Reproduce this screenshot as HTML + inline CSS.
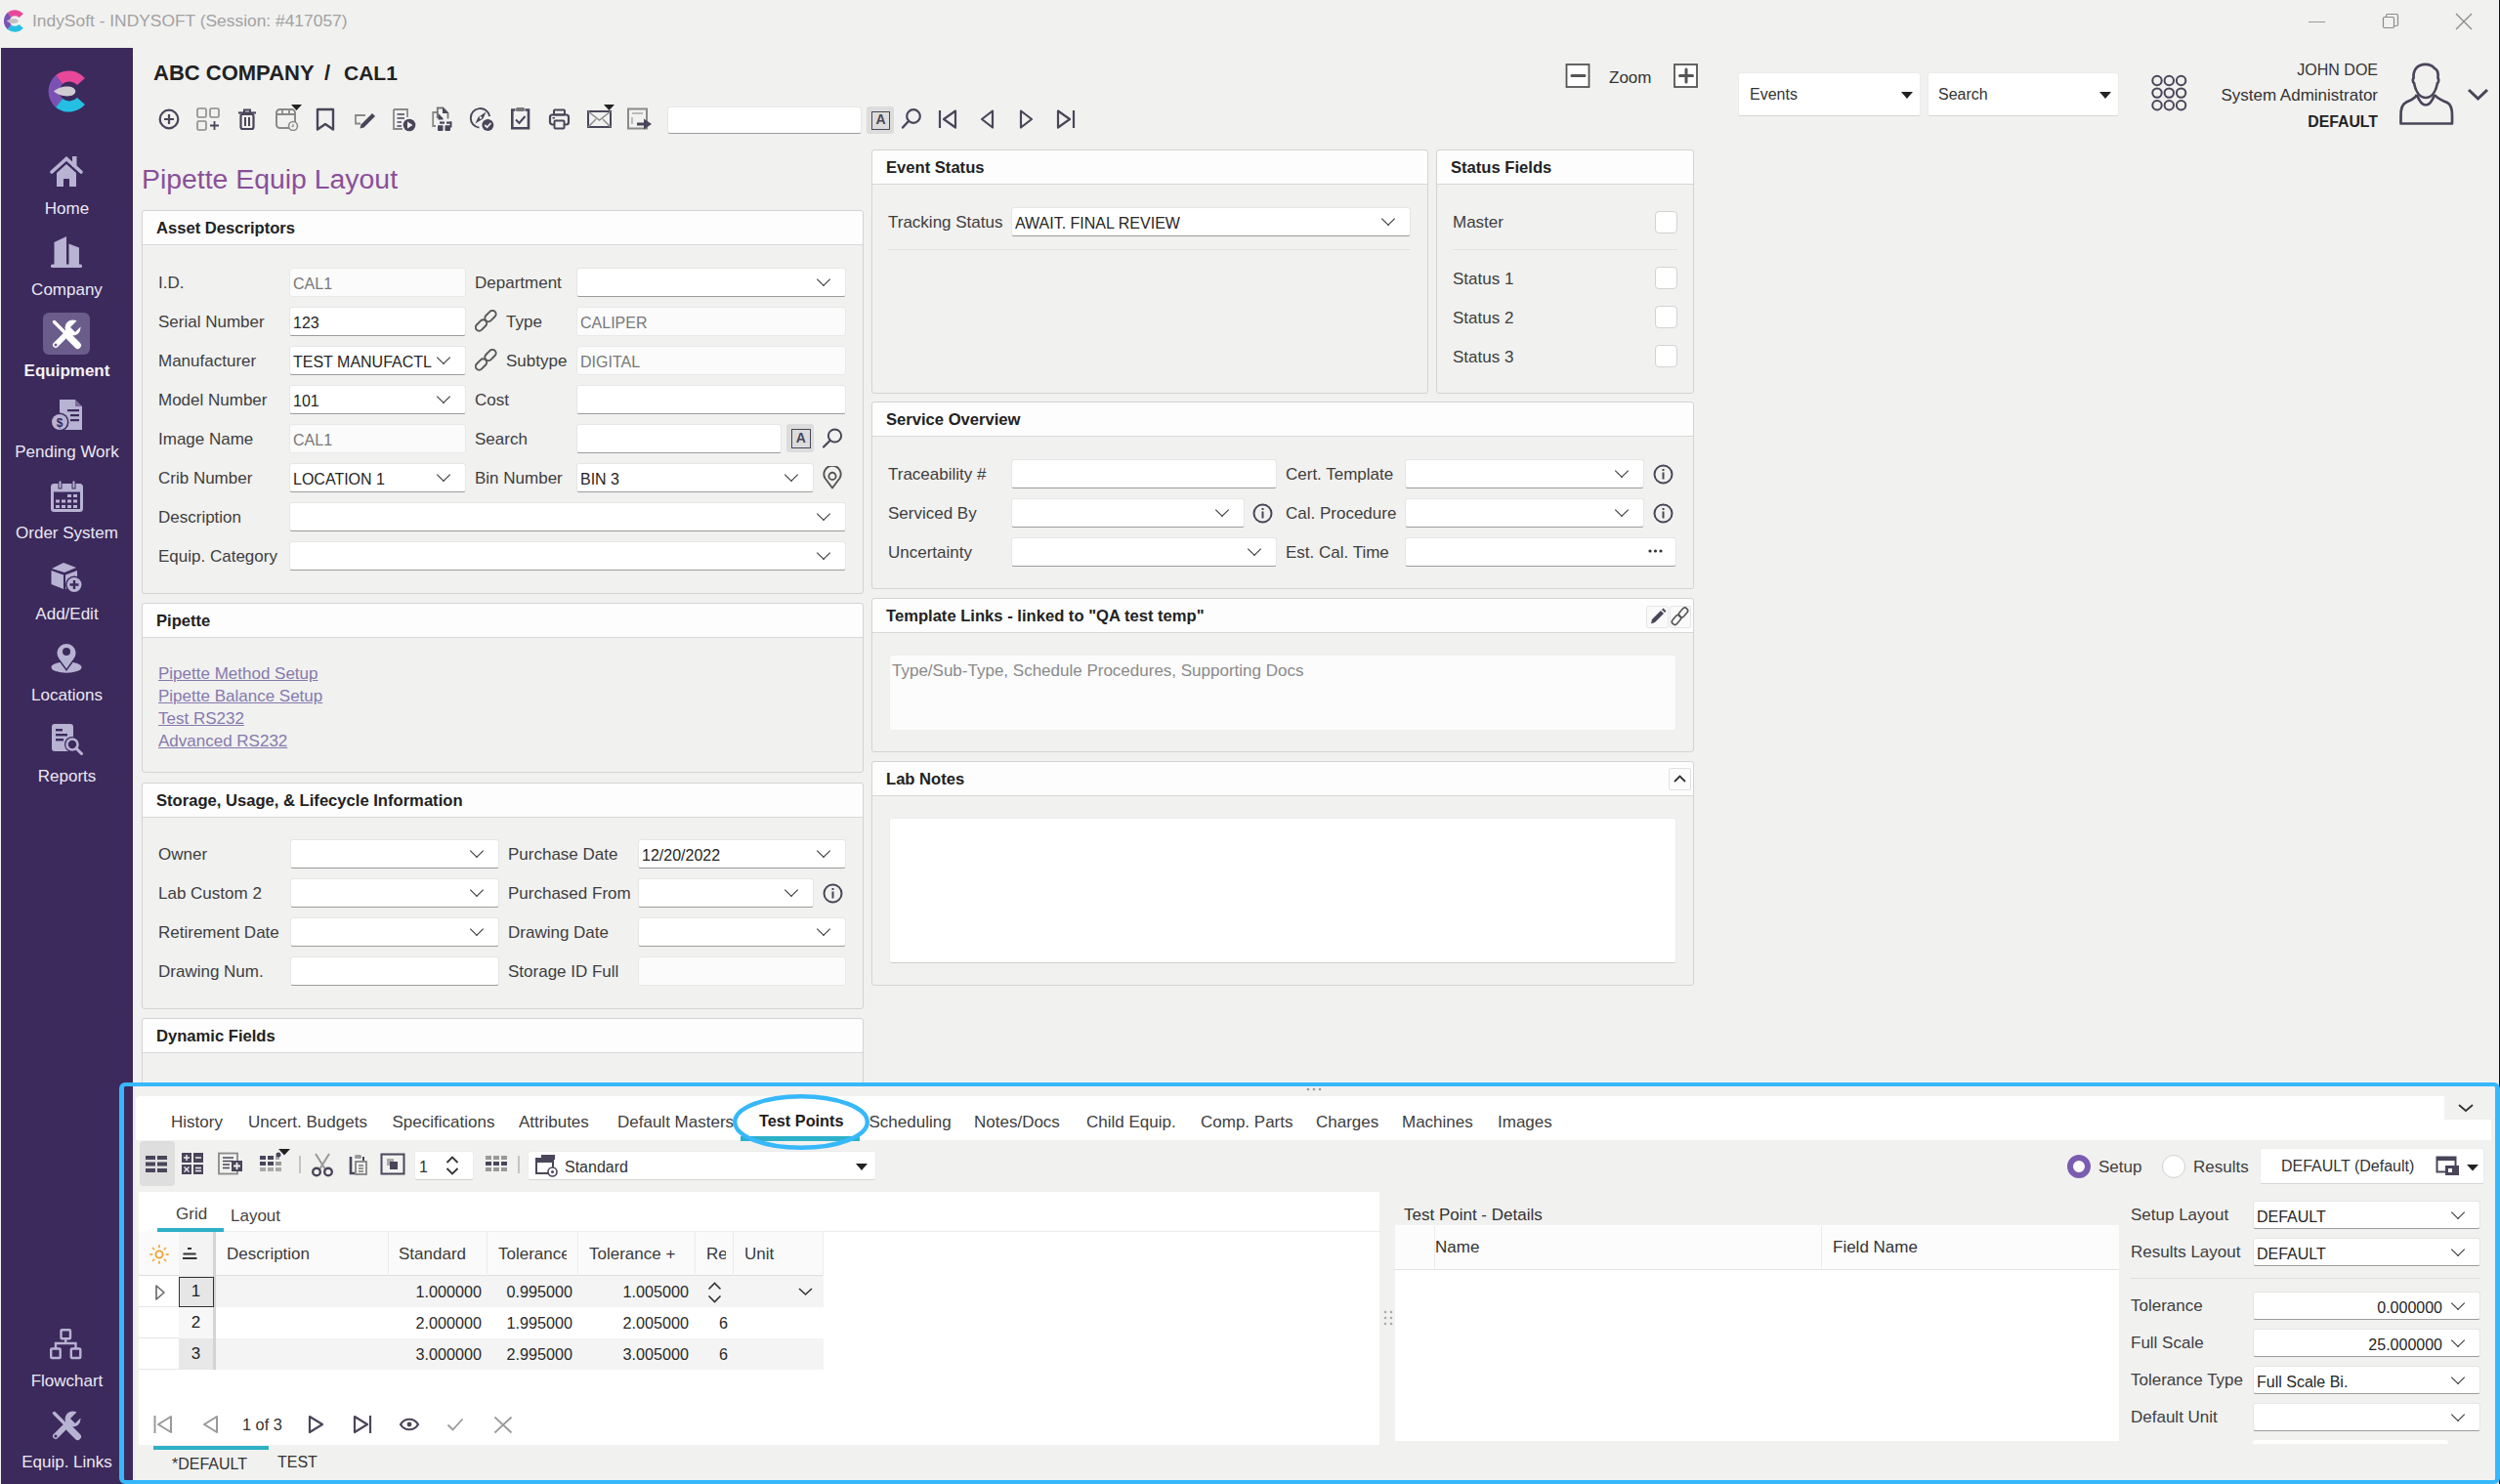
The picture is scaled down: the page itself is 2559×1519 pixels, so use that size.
<!DOCTYPE html>
<html><head><meta charset="utf-8">
<style>
*{box-sizing:border-box;margin:0;padding:0}
html,body{width:2559px;height:1519px;overflow:hidden;background:#f1f1f0;font-family:"Liberation Sans",sans-serif;color:#3a3a3a;font-size:17px}
.a{position:absolute}
.t{position:absolute;white-space:nowrap;line-height:30px;height:30px}
.panel{position:absolute;border:1px solid #d3d3d3;border-radius:3px;background:#f1f1f0}
.ph{position:absolute;left:0;right:0;top:0;height:35px;background:#fdfdfd;border-bottom:1px solid #d8d8d8;border-radius:3px 3px 0 0;font-weight:bold;font-size:16.6px;color:#222;padding-left:14px;padding-top:1px;line-height:34px;white-space:nowrap}
.inp{position:absolute;height:30px;background:#fff;border-radius:3px;border:1px solid #e6e6e6;border-bottom:1px solid #9c9c9c;line-height:29px;padding-top:1px;padding-left:3px;color:#262626;white-space:nowrap;overflow:hidden;font-size:16px}
.ro{background:#fbfbfb;border:1px solid #e9e9e9;color:#787878}
.dd span{display:inline-block;max-width:calc(100% - 34px);overflow:hidden;vertical-align:top}
.dd::after{content:'';position:absolute;right:17px;top:6px;width:9px;height:9px;border-right:1.6px solid #333;border-bottom:1.6px solid #333;transform:rotate(45deg)}
.lbl{position:absolute;white-space:nowrap;line-height:30px;height:30px;color:#3e3e3e;margin-top:1px}
.side{position:absolute;left:1px;top:49px;width:135px;height:1470px;background:#3b2a5b}
.si{position:absolute;left:1px;width:135px;text-align:center;color:#ece8f4;font-size:17px;line-height:20px;white-space:nowrap}
.lnk{position:absolute;color:#857aae;text-decoration:underline;white-space:nowrap;line-height:23px;font-size:17px}
.cb{position:absolute;width:23px;height:23px;background:#fff;border:1px solid #d2d2d2;border-radius:4px}
.sep{position:absolute;height:1px;background:#e2e2e2}
</style></head><body>
<svg class="a" style="left:3px;top:9px" width="22" height="25" viewBox="0 0 41 47">
 <path d="M39 10 A22 22 0 0 0 9 7 L16 16 A11 11 0 0 1 31 17 Z" fill="#e8489a"/>
 <path d="M9 7 A22 22 0 0 0 9 40 L16 31 A11 11 0 0 1 16 16 Z" fill="#7b52b4"/>
 <path d="M9 40 A22 22 0 0 0 39 37 L31 30 A11 11 0 0 1 16 31 Z" fill="#24bfe3"/>
 <path d="M7 23.5 C12 19 22 17 27 20 C30 22 30 25 27 27 C22 30 12 28 7 23.5 Z" fill="#c4c0c4"/></svg>
<div class="t" style="left:33px;top:6px;font-size:17.4px;color:#a2a2a2">IndySoft - INDYSOFT (Session: #417057)</div>
<div class="a" style="left:2363px;top:22px;width:17px;height:1px;background:#9a9a9a"></div>
<svg class="a" style="left:2438px;top:13px" width="18" height="18" viewBox="0 0 18 18"><rect x="1.5" y="4.5" width="11" height="11" rx="1.5" fill="none" stroke="#8a8a8a" stroke-width="1.2"/><path d="M4.5 4.5 V3 a1.5 1.5 0 0 1 1.5 -1.5 H15 a1.5 1.5 0 0 1 1.5 1.5 V12 a1.5 1.5 0 0 1 -1.5 1.5 H12.5" fill="none" stroke="#8a8a8a" stroke-width="1.2"/></svg>
<svg class="a" style="left:2513px;top:13px" width="18" height="18" viewBox="0 0 18 18"><path d="M1 1 L17 17 M17 1 L1 17" stroke="#8a8a8a" stroke-width="1.3"/></svg>
<div class="a" style="left:2558px;top:0;width:1px;height:1519px;background:#111"></div>
<div class="side"></div>
<div class="t" style="left:157px;top:60px;font-size:22px;font-weight:bold;color:#222">ABC COMPANY</div>
<div class="t" style="left:332px;top:60px;font-size:22px;font-weight:bold;color:#222">/</div>
<div class="t" style="left:352px;top:60px;font-size:21px;font-weight:bold;color:#222">CAL1</div>
<div class="t" style="left:145px;top:164px;font-size:28.4px;color:#8a4f98;line-height:38px;height:38px">Pipette Equip Layout</div>
<div class="panel" style="left:145px;top:215px;width:739px;height:393px"><div class="ph">Asset Descriptors</div></div>
<div class="panel" style="left:145px;top:617px;width:739px;height:174px"><div class="ph">Pipette</div></div>
<div class="panel" style="left:145px;top:801px;width:739px;height:232px"><div class="ph">Storage, Usage, &amp; Lifecycle Information</div></div>
<div class="panel" style="left:145px;top:1042px;width:739px;height:120px"><div class="ph">Dynamic Fields</div></div>
<div class="panel" style="left:892px;top:153px;width:570px;height:250px"><div class="ph">Event Status</div></div>
<div class="panel" style="left:1470px;top:153px;width:264px;height:250px"><div class="ph">Status Fields</div></div>
<div class="panel" style="left:892px;top:411px;width:842px;height:192px"><div class="ph">Service Overview</div></div>
<div class="panel" style="left:892px;top:612px;width:842px;height:158px"><div class="ph">Template Links - linked to "QA test temp"</div></div>
<div class="panel" style="left:892px;top:779px;width:842px;height:230px"><div class="ph">Lab Notes</div></div>
<div class="lbl" style="left:162px;top:274px;">I.D.</div>
<div class="lbl" style="left:162px;top:314px;">Serial Number</div>
<div class="lbl" style="left:162px;top:354px;">Manufacturer</div>
<div class="lbl" style="left:162px;top:394px;">Model Number</div>
<div class="lbl" style="left:162px;top:434px;">Image Name</div>
<div class="lbl" style="left:162px;top:474px;">Crib Number</div>
<div class="lbl" style="left:162px;top:514px;">Description</div>
<div class="lbl" style="left:162px;top:554px;">Equip. Category</div>
<div class="inp ro" style="left:296px;top:274px;width:181px;height:30px;"><span style="">CAL1</span></div>
<div class="inp" style="left:296px;top:314px;width:181px;height:30px;"><span style="">123</span></div>
<div class="inp dd" style="left:296px;top:354px;width:181px;height:30px;"><span style="">TEST MANUFACTL</span></div>
<div class="inp dd" style="left:296px;top:394px;width:181px;height:30px;"><span style="">101</span></div>
<div class="inp ro" style="left:296px;top:434px;width:181px;height:30px;"><span style="">CAL1</span></div>
<div class="inp dd" style="left:296px;top:474px;width:181px;height:30px;"><span style="">LOCATION 1</span></div>
<div class="inp dd" style="left:296px;top:514px;width:570px;height:30px;"><span style=""></span></div>
<div class="inp dd" style="left:296px;top:554px;width:570px;height:30px;"><span style=""></span></div>
<div class="lbl" style="left:486px;top:274px;">Department</div>
<div class="inp dd" style="left:590px;top:274px;width:276px;height:30px;"><span style=""></span></div>
<div class="lbl" style="left:518px;top:314px;">Type</div>
<div class="inp ro" style="left:590px;top:314px;width:276px;height:30px;"><span style="">CALIPER</span></div>
<div class="lbl" style="left:518px;top:354px;">Subtype</div>
<div class="inp ro" style="left:590px;top:354px;width:276px;height:30px;"><span style="">DIGITAL</span></div>
<div class="lbl" style="left:486px;top:394px;">Cost</div>
<div class="inp" style="left:590px;top:394px;width:276px;height:30px;"><span style=""></span></div>
<div class="lbl" style="left:486px;top:434px;">Search</div>
<div class="inp" style="left:590px;top:434px;width:210px;height:30px;"><span style=""></span></div>
<div class="lbl" style="left:486px;top:474px;">Bin Number</div>
<div class="inp dd" style="left:590px;top:474px;width:243px;height:30px;"><span style="">BIN 3</span></div>
<div class="lnk" style="left:162px;top:678px">Pipette Method Setup</div>
<div class="lnk" style="left:162px;top:701px">Pipette Balance Setup</div>
<div class="lnk" style="left:162px;top:724px">Test RS232</div>
<div class="lnk" style="left:162px;top:747px">Advanced RS232</div>
<div class="lbl" style="left:162px;top:859px;">Owner</div>
<div class="lbl" style="left:162px;top:899px;">Lab Custom 2</div>
<div class="lbl" style="left:162px;top:939px;">Retirement Date</div>
<div class="lbl" style="left:162px;top:979px;">Drawing Num.</div>
<div class="inp dd" style="left:297px;top:859px;width:214px;height:30px;"><span style=""></span></div>
<div class="inp dd" style="left:297px;top:899px;width:214px;height:30px;"><span style=""></span></div>
<div class="inp dd" style="left:297px;top:939px;width:214px;height:30px;"><span style=""></span></div>
<div class="inp" style="left:297px;top:979px;width:214px;height:30px;"><span style=""></span></div>
<div class="lbl" style="left:520px;top:859px;">Purchase Date</div>
<div class="lbl" style="left:520px;top:899px;">Purchased From</div>
<div class="lbl" style="left:520px;top:939px;">Drawing Date</div>
<div class="lbl" style="left:520px;top:979px;">Storage ID Full</div>
<div class="inp dd" style="left:653px;top:859px;width:213px;height:30px;"><span style="">12/20/2022</span></div>
<div class="inp dd" style="left:653px;top:899px;width:180px;height:30px;"><span style=""></span></div>
<div class="inp dd" style="left:653px;top:939px;width:213px;height:30px;"><span style=""></span></div>
<div class="inp ro" style="left:653px;top:979px;width:213px;height:30px;"><span style=""></span></div>
<svg class="a" style="left:842px;top:904px" width="21" height="21" viewBox="0 0 21 21"><circle cx="10.5" cy="10.5" r="9" fill="none" stroke="#4b4559" stroke-width="2"/><rect x="9.5" y="8.5" width="2" height="7" fill="#4b4559"/><rect x="9.5" y="5" width="2" height="2" fill="#4b4559"/></svg>
<div class="lbl" style="left:909px;top:212px;">Tracking Status</div>
<div class="inp dd" style="left:1035px;top:212px;width:409px;height:30px;"><span style="">AWAIT. FINAL REVIEW</span></div>
<div class="sep" style="left:909px;top:255px;width:535px"></div>
<div class="lbl" style="left:1487px;top:212px;">Master</div>
<div class="lbl" style="left:1487px;top:270px;">Status 1</div>
<div class="lbl" style="left:1487px;top:310px;">Status 2</div>
<div class="lbl" style="left:1487px;top:350px;">Status 3</div>
<div class="cb" style="left:1694px;top:216px"></div>
<div class="cb" style="left:1694px;top:273px"></div>
<div class="cb" style="left:1694px;top:313px"></div>
<div class="cb" style="left:1694px;top:353px"></div>
<div class="sep" style="left:1487px;top:255px;width:230px"></div>
<div class="lbl" style="left:909px;top:470px;">Traceability #</div>
<div class="lbl" style="left:909px;top:510px;">Serviced By</div>
<div class="lbl" style="left:909px;top:550px;">Uncertainty</div>
<div class="inp" style="left:1035px;top:470px;width:272px;height:30px;"><span style=""></span></div>
<div class="inp dd" style="left:1035px;top:510px;width:239px;height:30px;"><span style=""></span></div>
<div class="inp dd" style="left:1035px;top:550px;width:272px;height:30px;"><span style=""></span></div>
<svg class="a" style="left:1282px;top:515px" width="21" height="21" viewBox="0 0 21 21"><circle cx="10.5" cy="10.5" r="9" fill="none" stroke="#4b4559" stroke-width="2"/><rect x="9.5" y="8.5" width="2" height="7" fill="#4b4559"/><rect x="9.5" y="5" width="2" height="2" fill="#4b4559"/></svg>
<div class="lbl" style="left:1316px;top:470px;">Cert. Template</div>
<div class="lbl" style="left:1316px;top:510px;">Cal. Procedure</div>
<div class="lbl" style="left:1316px;top:550px;">Est. Cal. Time</div>
<div class="inp dd" style="left:1438px;top:470px;width:245px;height:30px;"><span style=""></span></div>
<div class="inp dd" style="left:1438px;top:510px;width:245px;height:30px;"><span style=""></span></div>
<div class="inp" style="left:1438px;top:550px;width:278px;height:30px;"><span style=""></span></div>
<svg class="a" style="left:1692px;top:475px" width="21" height="21" viewBox="0 0 21 21"><circle cx="10.5" cy="10.5" r="9" fill="none" stroke="#4b4559" stroke-width="2"/><rect x="9.5" y="8.5" width="2" height="7" fill="#4b4559"/><rect x="9.5" y="5" width="2" height="2" fill="#4b4559"/></svg>
<svg class="a" style="left:1692px;top:515px" width="21" height="21" viewBox="0 0 21 21"><circle cx="10.5" cy="10.5" r="9" fill="none" stroke="#4b4559" stroke-width="2"/><rect x="9.5" y="8.5" width="2" height="7" fill="#4b4559"/><rect x="9.5" y="5" width="2" height="2" fill="#4b4559"/></svg>
<div class="a" style="left:910px;top:670px;width:806px;height:78px;background:#fcfcfc;border:1px solid #efefef;border-radius:3px"></div>
<div class="lbl" style="left:913px;top:671px;color:#8a8a8a">Type/Sub-Type, Schedule Procedures, Supporting Docs</div>
<div class="a" style="left:910px;top:837px;width:806px;height:149px;background:#fff;border:1px solid #ececec;border-bottom:1px solid #cfcfcf;border-radius:3px"></div>
<svg class="a" style="left:48px;top:70px" width="41" height="47" viewBox="0 0 41 47">
 <path d="M39 10 A22 22 0 0 0 9 7 L16 16 A11 11 0 0 1 31 17 Z" fill="#e8489a"/>
 <path d="M9 7 A22 22 0 0 0 9 40 L16 31 A11 11 0 0 1 16 16 Z" fill="#7b52b4"/>
 <path d="M9 40 A22 22 0 0 0 39 37 L31 30 A11 11 0 0 1 16 31 Z" fill="#24bfe3"/>
 <path d="M7 23.5 C12 19 22 17 27 20 C30 22 30 25 27 27 C22 30 12 28 7 23.5 Z" fill="#d0cbd3"/></svg>
<svg class="a" style="left:51px;top:159px" width="34" height="33" viewBox="0 0 34 33">
 <path d="M2 17 L17 3.5 L32 17" fill="none" stroke="#b8b2d3" stroke-width="3.6" stroke-linecap="round"/>
 <rect x="23" y="1" width="4.5" height="11" fill="#b8b2d3"/>
 <path d="M7 18 L17 9 L27 18 V32 H20 V24 H14 V32 H7 Z" fill="#b8b2d3"/></svg>
<svg class="a" style="left:52px;top:242px" width="32" height="32" viewBox="0 0 32 32">
 <path d="M3.5 6 L16 0 V29 H3.5 Z" fill="#b8b2d3"/>
 <path d="M18.5 7.5 L29 11.5 V29 H18.5 Z" fill="#b8b2d3"/>
 <rect x="0" y="28.5" width="32" height="3.5" rx="1.5" fill="#b8b2d3"/></svg>
<div class="a" style="left:44px;top:320px;width:48px;height:43px;background:#6b5d8b;border-radius:6px"></div>
<svg class="a" style="left:52px;top:326px" width="32" height="32" viewBox="0 0 32 32">
 <path d="M3.5 3.5 L16 16" stroke="#ffffff" stroke-width="3.4" stroke-linecap="round"/>
 <path d="M19.5 19.5 L27.5 27.5" stroke="#ffffff" stroke-width="7" stroke-linecap="round"/>
 <path d="M5 27 L18 14" stroke="#ffffff" stroke-width="6" stroke-linecap="round"/>
 <circle cx="22.5" cy="9.5" r="8" fill="#ffffff"/>
 <path d="M20 9 L27 2 L32 7 L25 14 Z" fill="#6b5d8b"/>
 <circle cx="5" cy="27" r="1.5" fill="#6b5d8b"/></svg>
<svg class="a" style="left:52px;top:409px" width="33" height="32" viewBox="0 0 33 32">
 <path d="M9 0 H25 L32 7 V31 H9 Z" fill="#b8b2d3"/>
 <path d="M25 0 V7 H32" fill="#3b2a5b" opacity="0.5"/>
 <rect x="17" y="10" width="12" height="2.2" fill="#3b2a5b"/>
 <rect x="20" y="15" width="9" height="2.2" fill="#3b2a5b"/>
 <rect x="20" y="20" width="9" height="2.2" fill="#3b2a5b"/>
 <circle cx="9" cy="23" r="9.5" fill="#3b2a5b"/>
 <circle cx="9" cy="23" r="8" fill="#b8b2d3"/>
 <text x="9" y="28" font-size="12" font-weight="bold" text-anchor="middle" fill="#3b2a5b" font-family="Liberation Sans">$</text></svg>
<svg class="a" style="left:52px;top:492px" width="33" height="32" viewBox="0 0 33 32">
 <rect x="1.5" y="4.5" width="30" height="26" rx="2" fill="none" stroke="#b8b2d3" stroke-width="3"/>
 <rect x="1.5" y="4.5" width="30" height="7" fill="#b8b2d3"/>
 <rect x="8" y="0" width="3" height="8" fill="#b8b2d3" stroke="#3b2a5b" stroke-width="1"/>
 <rect x="22" y="0" width="3" height="8" fill="#b8b2d3" stroke="#3b2a5b" stroke-width="1"/>
 <g fill="#b8b2d3"><rect x="17" y="14" width="4" height="3"/><rect x="23" y="14" width="4" height="3"/>
 <rect x="5" y="19.5" width="4" height="3"/><rect x="11" y="19.5" width="4" height="3"/><rect x="17" y="19.5" width="4" height="3"/><rect x="23" y="19.5" width="4" height="3"/>
 <rect x="5" y="25" width="4" height="3"/><rect x="11" y="25" width="4" height="3"/><rect x="17" y="25" width="4" height="3"/><rect x="23" y="25" width="4" height="3"/></g></svg>
<svg class="a" style="left:52px;top:575px" width="33" height="32" viewBox="0 0 33 32">
 <path d="M1 7 L13 1 L26 6 L14 11 Z" fill="#b8b2d3"/>
 <path d="M0.5 9 L13 13.5 V28 L0.5 23 Z" fill="#b8b2d3"/>
 <path d="M15 13.5 L27 9 V17 A9 9 0 0 0 18 27 L15 28 Z" fill="#b8b2d3"/>
 <circle cx="24" cy="23.5" r="9" fill="#3b2a5b"/>
 <circle cx="24" cy="23.5" r="7.5" fill="#b8b2d3"/>
 <path d="M24 19 V28 M19.5 23.5 H28.5" stroke="#3b2a5b" stroke-width="2.4"/></svg>
<svg class="a" style="left:52px;top:657px" width="32" height="32" viewBox="0 0 32 32">
 <ellipse cx="16" cy="26" rx="15.5" ry="5.8" fill="#b8b2d3"/>
 <path d="M16 30 L6.5 17 A11 11 0 1 1 25.5 17 Z" fill="#3b2a5b"/>
 <path d="M16 27.5 L8 16.5 A9.5 9.5 0 1 1 24 16.5 Z" fill="#b8b2d3"/>
 <circle cx="16" cy="10" r="4" fill="#3b2a5b"/></svg>
<svg class="a" style="left:53px;top:741px" width="32" height="32" viewBox="0 0 32 32">
 <rect x="0" y="0" width="22" height="28" rx="3" fill="#b8b2d3"/>
 <rect x="4" y="5" width="7" height="2.4" fill="#3b2a5b"/><rect x="4" y="10" width="12" height="2.4" fill="#3b2a5b"/><rect x="4" y="15" width="8" height="2.4" fill="#3b2a5b"/>
 <circle cx="21" cy="21" r="8" fill="#3b2a5b"/>
 <circle cx="21" cy="21" r="5.5" fill="none" stroke="#b8b2d3" stroke-width="2.6"/>
 <path d="M25 25 L30.5 30.5" stroke="#b8b2d3" stroke-width="3" stroke-linecap="round"/></svg>
<svg class="a" style="left:51px;top:1360px" width="33" height="32" viewBox="0 0 33 32">
 <g fill="none" stroke="#b8b2d3" stroke-width="2.4">
 <rect x="11.5" y="1.2" width="9.5" height="9" rx="1"/>
 <rect x="1.2" y="20.5" width="9.5" height="9.5" rx="1"/>
 <rect x="21.8" y="20.5" width="9.5" height="9.5" rx="1"/>
 <path d="M16.2 10.2 V15 M6 20.5 V15 H26.5 V20.5"/></g></svg>
<svg class="a" style="left:52px;top:1443px" width="32" height="32" viewBox="0 0 32 32">
 <path d="M3.5 3.5 L16 16" stroke="#b8b2d3" stroke-width="3.4" stroke-linecap="round"/>
 <path d="M19.5 19.5 L27.5 27.5" stroke="#b8b2d3" stroke-width="7" stroke-linecap="round"/>
 <path d="M5 27 L18 14" stroke="#b8b2d3" stroke-width="6" stroke-linecap="round"/>
 <circle cx="22.5" cy="9.5" r="8" fill="#b8b2d3"/>
 <path d="M20 9 L27 2 L32 7 L25 14 Z" fill="#3b2a5b"/>
 <circle cx="5" cy="27" r="1.5" fill="#3b2a5b"/></svg>
<div class="si" style="top:204px;">Home</div>
<div class="si" style="top:287px;">Company</div>
<div class="si" style="top:370px;font-weight:bold;color:#f4f2f8">Equipment</div>
<div class="si" style="top:453px;">Pending Work</div>
<div class="si" style="top:536px;">Order System</div>
<div class="si" style="top:619px;">Add/Edit</div>
<div class="si" style="top:702px;">Locations</div>
<div class="si" style="top:785px;">Reports</div>
<div class="si" style="top:1404px;">Flowchart</div>
<div class="si" style="top:1487px;">Equip. Links</div>
<svg class="a" style="left:160px;top:107px" width="30" height="30" viewBox="0 0 30 30"><circle cx="13" cy="15" r="9.3" fill="none" stroke="#4b4559" stroke-width="2.2"/><path d="M13 10 V20 M8 15 H18" stroke="#4b4559" stroke-width="2.2"/></svg>
<svg class="a" style="left:199px;top:107px" width="30" height="30" viewBox="0 0 30 30"><g fill="none" stroke="#8a8a8a" stroke-width="1.6"><rect x="3" y="4" width="9" height="9" rx="1.5"/><rect x="16" y="4" width="9" height="9" rx="1.5"/><rect x="3" y="17" width="9" height="9" rx="1.5"/></g><path d="M20.5 17 V26 M16 21.5 H25" stroke="#4b4559" stroke-width="1.8"/></svg>
<svg class="a" style="left:240px;top:107px" width="30" height="30" viewBox="0 0 30 30"><path d="M4 8.5 H22" stroke="#4b4559" stroke-width="2.2"/><path d="M10 8 V5.5 H16 V8" fill="none" stroke="#4b4559" stroke-width="2"/><rect x="6.5" y="10" width="13" height="15" rx="2" fill="none" stroke="#4b4559" stroke-width="2.2"/><path d="M11 13 V22 M15 13 V22" stroke="#4b4559" stroke-width="2"/></svg>
<svg class="a" style="left:280px;top:104px" width="30" height="30" viewBox="0 0 30 30"><rect x="3" y="8" width="19" height="19" rx="3.5" fill="none" stroke="#8a8a8a" stroke-width="2"/><path d="M3 13 H22 M9 8 V13 M16 8 V13" stroke="#8a8a8a" stroke-width="1.8"/><circle cx="20" cy="25" r="4.5" fill="#f1f1f0" stroke="#8a8a8a" stroke-width="1.6"/><path d="M20 23 V25.5 H18.5" stroke="#8a8a8a" stroke-width="1.2" fill="none"/><path d="M18 3 h11 l-5.5 6 Z" fill="#222"/></svg>
<svg class="a" style="left:320px;top:107px" width="30" height="30" viewBox="0 0 30 30"><path d="M5 5 H21 V25.5 L13 20 L5 25.5 Z" fill="none" stroke="#4b4559" stroke-width="2.4" stroke-linejoin="round"/></svg>
<svg class="a" style="left:360px;top:107px" width="30" height="30" viewBox="0 0 30 30"><path d="M14 11 H4 V19.5 H9" fill="none" stroke="#8a8a8a" stroke-width="1.8"/><path d="M9.5 20.5 L21 9 L24 12 L12.5 23.5 L8.5 24.5 Z" fill="#4b4559"/></svg>
<svg class="a" style="left:399px;top:107px" width="30" height="30" viewBox="0 0 30 30"><path d="M4 5 H18 V13" fill="none" stroke="#8a8a8a" stroke-width="1.8"/><path d="M4 5 V25 H13" fill="none" stroke="#8a8a8a" stroke-width="1.8"/><path d="M7.5 10 H15 M7.5 14 H15 M7.5 18 H12 M7.5 22 H12" stroke="#4b4559" stroke-width="1.6"/><circle cx="20" cy="21" r="6.3" fill="#4b4559"/><path d="M18 17.5 L23.5 21 L18 24.5 Z" fill="#f1f1f0"/></svg>
<svg class="a" style="left:440px;top:107px" width="30" height="30" viewBox="0 0 30 30"><path d="M8.5 8 H3.2 V22 H6" fill="none" stroke="#888" stroke-width="1.8"/><path d="M7.8 14 V3.5 H13.5 L18.5 8.5 V14.5" fill="none" stroke="#777" stroke-width="1.8"/><path d="M13 3 L19 9 H13 Z" fill="#4b4559"/><path d="M8.5 9 L13.5 14 V15.5 H8.5 Z" fill="#4b4559"/><g fill="#4b4559"><rect x="8" y="21.3" width="5.5" height="5.7" rx="0.8"/><rect x="15.5" y="21.3" width="5.5" height="5.7" rx="0.8"/><rect x="10" y="17.5" width="5" height="2.2"/><rect x="17" y="17.5" width="5" height="2.2"/><rect x="20.5" y="17.5" width="2" height="6"/></g></svg>
<svg class="a" style="left:479px;top:107px" width="30" height="30" viewBox="0 0 30 30"><path d="M22.2 12 A9.8 9.8 0 1 0 11.5 23.6" fill="none" stroke="#4b4559" stroke-width="1.9"/><path d="M7.5 19.5 L10.5 13 L18.5 7.5 L15.5 14.5 Z" fill="#4b4559"/><circle cx="13" cy="13.5" r="1.3" fill="#f1f1f0"/><circle cx="20.3" cy="21" r="6" fill="#4b4559"/><path d="M17.3 21 L19.6 23.3 L23.5 19" fill="none" stroke="#f1f1f0" stroke-width="1.8"/></svg>
<svg class="a" style="left:519px;top:107px" width="30" height="30" viewBox="0 0 30 30"><path d="M8.5 5.5 H5.3 V24.2 H22 V5.5 H18.5" fill="none" stroke="#4b4559" stroke-width="2.6"/><rect x="9" y="3" width="9" height="4" rx="1.5" fill="#777"/><path d="M9 15.5 L12.5 19 L18.5 12" fill="none" stroke="#4b4559" stroke-width="2"/></svg>
<svg class="a" style="left:559px;top:107px" width="30" height="30" viewBox="0 0 30 30"><rect x="8" y="5.5" width="11" height="5" rx="1" fill="none" stroke="#4b4559" stroke-width="2"/><rect x="4" y="10.5" width="19" height="10" rx="2.5" fill="none" stroke="#4b4559" stroke-width="2.2"/><rect x="8.5" y="16.5" width="10" height="8" rx="1" fill="#f1f1f0" stroke="#4b4559" stroke-width="2"/><rect x="6.5" y="13" width="2.5" height="1.5" fill="#4b4559"/></svg>
<svg class="a" style="left:599px;top:104px" width="32" height="30" viewBox="0 0 32 30"><rect x="3" y="10" width="23" height="16" fill="none" stroke="#4b4559" stroke-width="2"/><path d="M3 10 L14.5 19 L26 10 M3 26 L11 18 M26 26 L18 18" fill="none" stroke="#8a8a8a" stroke-width="1.5"/><path d="M19 3 h11 l-5.5 6 Z" fill="#222"/></svg>
<svg class="a" style="left:640px;top:107px" width="30" height="30" viewBox="0 0 30 30"><rect x="3" y="4.5" width="19" height="20" fill="none" stroke="#8a8a8a" stroke-width="2"/><path d="M7 9 H18" stroke="#bbb" stroke-width="2"/><path d="M7 13 V20" stroke="#bbb" stroke-width="2"/><path d="M12 20 H20" stroke="#4b4559" stroke-width="3"/><path d="M19 14.5 L27 20 L19 25.5 Z" fill="#4b4559"/></svg>
<div class="inp" style="left:683px;top:109px;width:199px;height:28px"></div>
<div class="a" style="left:887px;top:109px;width:28px;height:28px;background:#dcdcdc;border-radius:3px"></div>
<div class="a" style="left:892px;top:114px;width:19px;height:19px;border:1.8px solid #4b4559;font-weight:bold;font-size:14px;line-height:15px;text-align:center;color:#4b4559">A</div>
<svg class="a" style="left:920px;top:107px" width="30" height="30" viewBox="0 0 30 30"><circle cx="15" cy="12" r="6.8" fill="none" stroke="#4b4559" stroke-width="2.2"/><path d="M10 17 L4 23.5" stroke="#4b4559" stroke-width="2.4" stroke-linecap="round"/></svg>
<svg class="a" style="left:958px;top:107px" width="30" height="30" viewBox="0 0 30 30"><path d="M4 6 V24" stroke="#4b4559" stroke-width="2.2"/><path d="M20 6.5 L8 15 L20 23.5 Z" fill="none" stroke="#4b4559" stroke-width="2.2" stroke-linejoin="round"/></svg>
<svg class="a" style="left:999px;top:107px" width="30" height="30" viewBox="0 0 30 30"><path d="M17 6.5 L6 15 L17 23.5 Z" fill="none" stroke="#4b4559" stroke-width="2.2" stroke-linejoin="round"/></svg>
<svg class="a" style="left:1039px;top:107px" width="30" height="30" viewBox="0 0 30 30"><path d="M6 6.5 L17 15 L6 23.5 Z" fill="none" stroke="#4b4559" stroke-width="2.2" stroke-linejoin="round"/></svg>
<svg class="a" style="left:1079px;top:107px" width="30" height="30" viewBox="0 0 30 30"><path d="M20 6 V24" stroke="#4b4559" stroke-width="2.2"/><path d="M4 6.5 L16 15 L4 23.5 Z" fill="none" stroke="#4b4559" stroke-width="2.2" stroke-linejoin="round"/></svg>
<svg class="a" style="left:1600px;top:63px" width="30" height="30" viewBox="0 0 30 30"><rect x="3.5" y="3" width="23" height="23" fill="#fff" stroke="#555" stroke-width="1.8"/><path d="M9 14.5 H22" stroke="#555" stroke-width="3" stroke-linecap="round"/></svg>
<div class="lbl" style="left:1647px;top:64px;color:#333;font-size:17px">Zoom</div>
<svg class="a" style="left:1711px;top:63px" width="30" height="30" viewBox="0 0 30 30"><rect x="3" y="3" width="23" height="23" fill="#fff" stroke="#555" stroke-width="1.8"/><path d="M8.5 14.5 H21.5 M15 8 V21" stroke="#555" stroke-width="3" stroke-linecap="round"/></svg>
<div class="inp" style="left:1779px;top:74px;width:187px;height:45px;border:1px solid #ececec;border-bottom:1px solid #d6d6d6;line-height:42px;padding-left:11px;color:#333">Events</div>
<div class="a" style="left:1946px;top:94px;width:0;height:0;border-left:6px solid transparent;border-right:6px solid transparent;border-top:7px solid #222"></div>
<div class="inp" style="left:1973px;top:74px;width:196px;height:45px;border:1px solid #ececec;border-bottom:1px solid #d6d6d6;line-height:42px;padding-left:10px;color:#333">Search</div>
<div class="a" style="left:2149px;top:94px;width:0;height:0;border-left:6px solid transparent;border-right:6px solid transparent;border-top:7px solid #222"></div>
<svg class="a" style="left:2202px;top:76px" width="40" height="40" viewBox="0 0 40 40"><circle cx="6.0" cy="6.5" r="4.7" fill="none" stroke="#4b4559" stroke-width="2"/><circle cx="6.0" cy="19.1" r="4.7" fill="none" stroke="#4b4559" stroke-width="2"/><circle cx="6.0" cy="31.7" r="4.7" fill="none" stroke="#4b4559" stroke-width="2"/><circle cx="18.3" cy="6.5" r="4.7" fill="none" stroke="#4b4559" stroke-width="2"/><circle cx="18.3" cy="19.1" r="4.7" fill="none" stroke="#4b4559" stroke-width="2"/><circle cx="18.3" cy="31.7" r="4.7" fill="none" stroke="#4b4559" stroke-width="2"/><circle cx="30.6" cy="6.5" r="4.7" fill="none" stroke="#4b4559" stroke-width="2"/><circle cx="30.6" cy="19.1" r="4.7" fill="none" stroke="#4b4559" stroke-width="2"/><circle cx="30.6" cy="31.7" r="4.7" fill="none" stroke="#4b4559" stroke-width="2"/></svg>
<div class="a" style="left:2180px;top:59px;width:254px;text-align:right;color:#333;line-height:26.3px;font-size:17px"><span style="font-size:16px">JOHN DOE</span><br>System Administrator<br><b style="color:#222;font-size:15.8px">DEFAULT</b></div>
<svg class="a" style="left:2454px;top:62px" width="60" height="68" viewBox="0 0 60 68"><path d="M28.5 3.8 C20 3.8 16 10 16.5 18 C15.5 19 15.5 22 17 23 C18.5 31 22.5 38 29 38 C35.5 38 39.5 31 41 23 C42.5 22 42.5 19 41.5 18 C42 13 40.5 9 38 8 C36 5 33 3.8 28.5 3.8 Z" fill="none" stroke="#4b4559" stroke-width="2.7"/><path d="M20 35 C17 40 12 41 8.5 43 C4.5 45 3.5 50 3.5 56 V64.5 H56 V56 C56 50 55 45 51 43 C47 41 42 40 38 35 M20 35 C22.5 42 25.5 45.5 29 45.5 C32.5 45.5 35.5 42 38 35" fill="none" stroke="#4b4559" stroke-width="2.7" stroke-linejoin="round"/></svg>
<svg class="a" style="left:2524px;top:86px" width="26" height="20" viewBox="0 0 26 20"><path d="M3 6 L12.5 15 L22 6" fill="none" stroke="#4b4559" stroke-width="3"/></svg>
<div class="a" style="left:136px;top:1108px;width:2422px;height:411px;background:#f1f1f0"></div>
<div class="a" style="left:136px;top:1108px;width:2px;height:411px;background:#ebe8f3"></div>
<div class="a" style="left:139px;top:1122px;width:2411px;height:45px;background:#fff;border-radius:4px 4px 0 0"></div>
<div class="a" style="left:2502px;top:1122px;width:48px;height:24px;background:#f1f1f0"></div>
<svg class="a" style="left:2512px;top:1123px" width="24" height="22" viewBox="0 0 24 22"><path d="M5 8 L12 14 L19 8" fill="none" stroke="#333" stroke-width="1.8"/></svg>
<div class="lbl" style="left:175px;top:1133px;color:#404040">History</div>
<div class="lbl" style="left:254px;top:1133px;color:#404040">Uncert. Budgets</div>
<div class="lbl" style="left:401.5px;top:1133px;color:#404040">Specifications</div>
<div class="lbl" style="left:531px;top:1133px;color:#404040">Attributes</div>
<div class="lbl" style="left:632px;top:1133px;color:#404040">Default Masters</div>
<div class="lbl" style="left:889.5px;top:1133px;color:#404040">Scheduling</div>
<div class="lbl" style="left:997px;top:1133px;color:#404040">Notes/Docs</div>
<div class="lbl" style="left:1112px;top:1133px;color:#404040">Child Equip.</div>
<div class="lbl" style="left:1229px;top:1133px;color:#404040">Comp. Parts</div>
<div class="lbl" style="left:1347px;top:1133px;color:#404040">Charges</div>
<div class="lbl" style="left:1435px;top:1133px;color:#404040">Machines</div>
<div class="lbl" style="left:1533px;top:1133px;color:#404040">Images</div>
<div class="lbl" style="left:777px;top:1131px;font-weight:bold;color:#1e1e1e;font-size:16.3px">Test Points</div>
<div class="a" style="left:758px;top:1163px;width:122px;height:5px;background:#2db0c8"></div>
<div class="a" style="left:143px;top:1168px;width:36px;height:46px;background:#dedede;border-radius:4px"></div>
<svg class="a" style="left:148px;top:1182px" width="25" height="19"><g fill="#4b4559"><rect x="1" y="1" width="10" height="4"/><rect x="13" y="1" width="10" height="4"/><rect x="1" y="7.5" width="10" height="4"/><rect x="13" y="7.5" width="10" height="4"/><rect x="1" y="14" width="10" height="4"/><rect x="13" y="14" width="10" height="4"/></g></svg>
<svg class="a" style="left:185px;top:1179px" width="25" height="25"><g fill="#4b4559"><rect x="1" y="1" width="10" height="10"/><rect x="13" y="1" width="10" height="10"/><rect x="1" y="13" width="10" height="10"/><rect x="13" y="13" width="10" height="10"/></g><path d="M6 3 V9 M3 6 H9 M15 6 H21 M3.5 15.5 L8.5 20.5 M8.5 15.5 L3.5 20.5 M15 16.5 H21 M15 19.5 H21" stroke="#f1f1f0" stroke-width="1.4"/></svg>
<svg class="a" style="left:223px;top:1179px" width="27" height="25"><rect x="1" y="1.5" width="19" height="21" fill="none" stroke="#8a8a8a" stroke-width="1.8"/><path d="M5 6 H16 M5 9.5 H16 M5 13 H12 M5 16.5 H12" stroke="#4b4559" stroke-width="1.5"/><rect x="14" y="9" width="11" height="11" fill="#4b4559"/><path d="M19.5 11 V18 M16 14.5 H23" stroke="#f1f1f0" stroke-width="1.8"/></svg>
<svg class="a" style="left:265px;top:1175px" width="33" height="26"><g fill="#4b4559"><rect x="1" y="8" width="6" height="4"/><rect x="9" y="8" width="6" height="4"/><rect x="1" y="14" width="6" height="4"/><rect x="9" y="14" width="6" height="4"/><rect x="17" y="14" width="6" height="4" fill="#999"/></g><g fill="#aaa"><rect x="1" y="20" width="6" height="4"/><rect x="9" y="20" width="6" height="4"/><rect x="17" y="20" width="6" height="4"/><rect x="17" y="8" width="4" height="4"/></g><circle cx="20" cy="7" r="2.5" fill="#4b4559"/><path d="M20 1 h12 l-6 6.5 Z" fill="#222"/></svg>
<div class="a" style="left:306px;top:1183px;width:2px;height:18px;background:#c4c4c4"></div>
<svg class="a" style="left:318px;top:1180px" width="24" height="25"><path d="M5 1 L15 17 M19 1 L9 17" stroke="#999" stroke-width="2"/><circle cx="6" cy="19.5" r="3.8" fill="none" stroke="#4b4559" stroke-width="2.4"/><circle cx="18" cy="19.5" r="3.8" fill="none" stroke="#4b4559" stroke-width="2.4"/></svg>
<svg class="a" style="left:356px;top:1181px" width="21" height="23"><path d="M3 3 V20 H7" fill="none" stroke="#4b4559" stroke-width="2.6"/><rect x="7" y="1" width="7" height="4" rx="1.5" fill="#999"/><rect x="8" y="8" width="11" height="13" fill="none" stroke="#777" stroke-width="1.6"/><path d="M11 12 H16 M11 15 H16 M11 18 H16" stroke="#777" stroke-width="1.3"/><rect x="15" y="3" width="2" height="4" fill="#4b4559"/></svg>
<svg class="a" style="left:389px;top:1180px" width="27" height="24"><rect x="1.5" y="1.5" width="23" height="20" fill="none" stroke="#4b4559" stroke-width="2"/><rect x="7" y="6" width="7" height="7" fill="#aaa"/><rect x="10" y="9" width="8" height="8" fill="#4b4559"/></svg>
<div class="inp" style="left:424px;top:1178px;width:61px;height:30px;border:1px solid #ececec;border-bottom:1px solid #cfcfcf;padding-left:4px;color:#333">1</div>
<svg class="a" style="left:455px;top:1182px" width="16" height="22"><path d="M2.5 8 L8 2.5 L13.5 8 M2.5 14 L8 19.5 L13.5 14" fill="none" stroke="#333" stroke-width="1.8"/></svg>
<svg class="a" style="left:496px;top:1182px" width="24" height="18"><g fill="#999"><rect x="1" y="1" width="6" height="4"/><rect x="9" y="1" width="6" height="4"/><rect x="17" y="1" width="6" height="4"/><rect x="1" y="13" width="6" height="4"/><rect x="9" y="13" width="6" height="4"/><rect x="17" y="13" width="6" height="4"/></g><g fill="#4b4559"><rect x="1" y="7" width="6" height="4"/><rect x="9" y="7" width="6" height="4"/><rect x="17" y="7" width="6" height="4"/></g></svg>
<div class="a" style="left:530px;top:1183px;width:2px;height:18px;background:#c4c4c4"></div>
<div class="inp" style="left:540px;top:1178px;width:357px;height:30px;border:1px solid #ececec;border-bottom:1px solid #d6d6d6;padding-left:37px;color:#333">Standard</div>
<svg class="a" style="left:547px;top:1181px" width="26" height="24"><rect x="7" y="1" width="14" height="5" fill="#4b4559"/><rect x="2" y="5" width="17" height="15" fill="none" stroke="#4b4559" stroke-width="2"/><rect x="2" y="5" width="17" height="4" fill="#4b4559"/><circle cx="18.5" cy="18.5" r="4.5" fill="#fff" stroke="#4b4559" stroke-width="1.6"/><circle cx="18.5" cy="18.5" r="1.5" fill="#4b4559"/></svg>
<div class="a" style="left:876px;top:1191px;width:0;height:0;border-left:6px solid transparent;border-right:6px solid transparent;border-top:7px solid #222"></div>
<div class="a" style="left:2116px;top:1182px;width:24px;height:24px;border-radius:50%;border:6px solid #7a5db0;background:#fff"></div>
<div class="lbl" style="left:2148px;top:1179px;color:#404040">Setup</div>
<div class="a" style="left:2213px;top:1182px;width:24px;height:24px;border-radius:50%;border:1px solid #d0d0d0;background:#fff"></div>
<div class="lbl" style="left:2245px;top:1179px;color:#404040">Results</div>
<div class="inp" style="left:2313px;top:1175px;width:230px;height:37px;border:1px solid #ececec;border-bottom:1px solid #d6d6d6;padding-left:21px;line-height:34px;color:#333;font-size:16px">DEFAULT (Default)</div>
<svg class="a" style="left:2493px;top:1183px" width="46" height="22"><rect x="1.5" y="1.5" width="19" height="15" fill="none" stroke="#4b4559" stroke-width="2"/><rect x="1.5" y="1.5" width="19" height="3.5" fill="#4b4559"/><rect x="10" y="10" width="14" height="10" fill="#4b4559"/><rect x="13" y="13" width="4" height="4" fill="#fff"/><path d="M32 9 h12 l-6 6.5 Z" fill="#222"/></svg>
<div class="a" style="left:142px;top:1220px;width:1270px;height:259px;background:#fff"></div>
<div class="lbl" style="left:180px;top:1227px;color:#444">Grid</div>
<div class="lbl" style="left:236px;top:1229px;color:#444">Layout</div>
<div class="a" style="left:161px;top:1257px;width:68px;height:4px;background:#2db0c8"></div>
<div class="a" style="left:229px;top:1260px;width:1183px;height:1px;background:#ececec"></div>
<div class="a" style="left:142px;top:1261px;width:701px;height:45px;background:#fafafa;border-bottom:1px solid #dedede"></div>
<div class="a" style="left:183px;top:1261px;width:35px;height:45px;background:#f3f3f3"></div>
<div class="a" style="left:218px;top:1261px;width:3px;height:141px;background:#d4d4d4"></div>
<div class="a" style="left:397px;top:1261px;width:1px;height:45px;background:#ececec"></div>
<div class="a" style="left:498px;top:1261px;width:1px;height:45px;background:#ececec"></div>
<div class="a" style="left:591px;top:1261px;width:1px;height:45px;background:#ececec"></div>
<div class="a" style="left:711px;top:1261px;width:1px;height:45px;background:#ececec"></div>
<div class="a" style="left:750px;top:1261px;width:1px;height:45px;background:#ececec"></div>
<div class="a" style="left:842px;top:1261px;width:1px;height:45px;background:#ececec"></div>
<svg class="a" style="left:152px;top:1273px" width="22" height="22"><circle cx="11" cy="11" r="3.6" fill="none" stroke="#f0a030" stroke-width="1.8"/><g stroke="#f3b050" stroke-width="2" stroke-linecap="round"><path d="M11 2 V3.5 M11 18.5 V20 M2 11 H3.5 M18.5 11 H20 M4.6 4.6 L5.6 5.6 M16.4 16.4 L17.4 17.4 M4.6 17.4 L5.6 16.4 M16.4 5.6 L17.4 4.6"/></g></svg>
<svg class="a" style="left:184px;top:1275px" width="20" height="16"><path d="M8 3 H12 M3.5 8.5 H16.5 M3 13 H17.5" stroke="#333" stroke-width="2"/></svg>
<div class="lbl" style="left:232px;top:1268px;color:#3a3a3a">Description</div>
<div class="lbl" style="left:408px;top:1268px;color:#3a3a3a">Standard</div>
<div class="lbl" style="left:603px;top:1268px;color:#3a3a3a">Tolerance +</div>
<div class="lbl" style="left:762px;top:1268px;color:#3a3a3a">Unit</div>
<div class="lbl" style="left:510px;top:1268px;width:70px;overflow:hidden;color:#3a3a3a">Tolerance -</div>
<div class="lbl" style="left:723px;top:1268px;width:20px;overflow:hidden;color:#3a3a3a">Res</div>
<div class="a" style="left:221px;top:1306px;width:622px;height:32px;background:#f4f4f4"></div>
<div class="a" style="left:183px;top:1306px;width:35px;height:32px;background:#e6e6e6"></div>
<div class="a" style="left:142px;top:1337px;width:41px;height:1px;background:#e6e6e6"></div>
<div class="a" style="left:183px;top:1306px;width:35px;height:32px;text-align:center;line-height:32px;color:#222">1</div>
<div class="a" style="left:373px;top:1306px;width:120px;height:32px;text-align:right;line-height:32px;color:#2a2a2a;font-size:16.2px">1.000000</div>
<div class="a" style="left:466px;top:1306px;width:120px;height:32px;text-align:right;line-height:32px;color:#2a2a2a;font-size:16.2px">0.995000</div>
<div class="a" style="left:585px;top:1306px;width:120px;height:32px;text-align:right;line-height:32px;color:#2a2a2a;font-size:16.2px">1.005000</div>
<div class="a" style="left:625px;top:1306px;width:120px;height:32px;text-align:right;line-height:32px;color:#2a2a2a;font-size:16.2px"></div>
<div class="a" style="left:221px;top:1338px;width:622px;height:32px;background:#ffffff"></div>
<div class="a" style="left:183px;top:1338px;width:35px;height:32px;background:#f7f7f7"></div>
<div class="a" style="left:142px;top:1369px;width:41px;height:1px;background:#e6e6e6"></div>
<div class="a" style="left:183px;top:1338px;width:35px;height:32px;text-align:center;line-height:32px;color:#222">2</div>
<div class="a" style="left:373px;top:1338px;width:120px;height:32px;text-align:right;line-height:32px;color:#2a2a2a;font-size:16.2px">2.000000</div>
<div class="a" style="left:466px;top:1338px;width:120px;height:32px;text-align:right;line-height:32px;color:#2a2a2a;font-size:16.2px">1.995000</div>
<div class="a" style="left:585px;top:1338px;width:120px;height:32px;text-align:right;line-height:32px;color:#2a2a2a;font-size:16.2px">2.005000</div>
<div class="a" style="left:625px;top:1338px;width:120px;height:32px;text-align:right;line-height:32px;color:#2a2a2a;font-size:16.2px">6</div>
<div class="a" style="left:221px;top:1370px;width:622px;height:32px;background:#f4f4f4"></div>
<div class="a" style="left:183px;top:1370px;width:35px;height:32px;background:#e8e8e8"></div>
<div class="a" style="left:142px;top:1401px;width:41px;height:1px;background:#e6e6e6"></div>
<div class="a" style="left:183px;top:1370px;width:35px;height:32px;text-align:center;line-height:32px;color:#222">3</div>
<div class="a" style="left:373px;top:1370px;width:120px;height:32px;text-align:right;line-height:32px;color:#2a2a2a;font-size:16.2px">3.000000</div>
<div class="a" style="left:466px;top:1370px;width:120px;height:32px;text-align:right;line-height:32px;color:#2a2a2a;font-size:16.2px">2.995000</div>
<div class="a" style="left:585px;top:1370px;width:120px;height:32px;text-align:right;line-height:32px;color:#2a2a2a;font-size:16.2px">3.005000</div>
<div class="a" style="left:625px;top:1370px;width:120px;height:32px;text-align:right;line-height:32px;color:#2a2a2a;font-size:16.2px">6</div>
<div class="a" style="left:183px;top:1307px;width:36px;height:31px;border:1.5px solid #333"></div>
<svg class="a" style="left:157px;top:1313px" width="14" height="20"><path d="M3 3 L11 10 L3 17 Z" fill="none" stroke="#666" stroke-width="1.6" stroke-linejoin="round"/></svg>
<svg class="a" style="left:723px;top:1311px" width="17" height="24"><path d="M2.5 8.5 L8.5 2.5 L14.5 8.5 M2.5 15.5 L8.5 21.5 L14.5 15.5" fill="none" stroke="#333" stroke-width="1.6"/></svg>
<svg class="a" style="left:816px;top:1316px" width="17" height="12"><path d="M2 3 L8.5 9 L15 3" fill="none" stroke="#333" stroke-width="1.6"/></svg>
<svg class="a" style="left:154px;top:1446px" width="26" height="24"><path d="M4.5 3 V21" stroke="#999" stroke-width="2"/><path d="M21 4 L8 12 L21 20 Z" fill="none" stroke="#999" stroke-width="2" stroke-linejoin="round"/></svg>
<svg class="a" style="left:205px;top:1446px" width="20" height="24"><path d="M17 4 L4 12 L17 20 Z" fill="none" stroke="#999" stroke-width="2" stroke-linejoin="round"/></svg>
<div class="lbl" style="left:248px;top:1442px;color:#333;font-size:16.3px">1 of 3</div>
<svg class="a" style="left:313px;top:1446px" width="20" height="24"><path d="M4 4 L17 12 L4 20 Z" fill="none" stroke="#4b4559" stroke-width="2.2" stroke-linejoin="round"/></svg>
<svg class="a" style="left:358px;top:1446px" width="26" height="24"><path d="M21 3 V21" stroke="#4b4559" stroke-width="2.2"/><path d="M5 4 L18 12 L5 20 Z" fill="none" stroke="#4b4559" stroke-width="2.2" stroke-linejoin="round"/></svg>
<svg class="a" style="left:408px;top:1449px" width="22" height="18"><path d="M2 9 C6 2 16 2 20 9 C16 16 6 16 2 9 Z" fill="none" stroke="#4b4559" stroke-width="2.2"/><circle cx="11" cy="9" r="2.4" fill="#4b4559"/></svg>
<svg class="a" style="left:456px;top:1449px" width="20" height="18"><path d="M2.5 9.5 L7.5 14.5 L17.5 3.5" fill="none" stroke="#9a9a9a" stroke-width="1.8"/></svg>
<svg class="a" style="left:504px;top:1448px" width="22" height="21"><path d="M2.5 2.5 L19.5 18.5 M19.5 2.5 L2.5 18.5" stroke="#9a9a9a" stroke-width="1.8"/></svg>
<div class="a" style="left:157px;top:1480px;width:118px;height:4px;background:#2db0c8"></div>
<div class="lbl" style="left:176px;top:1483px;color:#333;font-size:16px">*DEFAULT</div>
<div class="lbl" style="left:284px;top:1481px;color:#333;font-size:16px">TEST</div>
<div class="a" style="left:1415px;top:1340px;width:12px;height:18px"><svg width="12" height="18"><g fill="#aaa"><circle cx="3" cy="3" r="1.3"/><circle cx="9" cy="3" r="1.3"/><circle cx="3" cy="9" r="1.3"/><circle cx="9" cy="9" r="1.3"/><circle cx="3" cy="15" r="1.3"/><circle cx="9" cy="15" r="1.3"/></g></svg></div>
<div class="a" style="left:1428px;top:1220px;width:741px;height:255px;background:#fff"></div>
<div class="a" style="left:1428px;top:1220px;width:741px;height:35px;background:#f1f1f0"></div>
<div class="lbl" style="left:1437px;top:1228px;color:#333">Test Point - Details</div>
<div class="a" style="left:1428px;top:1254px;width:741px;height:46px;background:#fcfcfc;border-bottom:1px solid #e2e2e2"></div>
<div class="a" style="left:1468px;top:1255px;width:1px;height:45px;background:#ececec"></div>
<div class="a" style="left:1864px;top:1255px;width:1px;height:45px;background:#ececec"></div>
<div class="lbl" style="left:1469px;top:1261px;color:#333">Name</div>
<div class="lbl" style="left:1876px;top:1261px;color:#333">Field Name</div>
<div class="lbl" style="left:2181px;top:1228px;">Setup Layout</div>
<div class="lbl" style="left:2181px;top:1266px;">Results Layout</div>
<div class="lbl" style="left:2181px;top:1321px;">Tolerance</div>
<div class="lbl" style="left:2181px;top:1359px;">Full Scale</div>
<div class="lbl" style="left:2181px;top:1397px;">Tolerance Type</div>
<div class="lbl" style="left:2181px;top:1435px;">Default Unit</div>
<div class="inp dd" style="left:2306px;top:1229px;width:233px;height:29px;"><span style="">DEFAULT</span></div>
<div class="inp dd" style="left:2306px;top:1267px;width:233px;height:29px;"><span style="">DEFAULT</span></div>
<div class="sep" style="left:2181px;top:1308px;width:358px;background:#e0e0e0"></div>
<div class="inp dd" style="left:2306px;top:1322px;width:233px;height:29px;text-align:right;padding-right:38px">0.000000</div>
<div class="inp dd" style="left:2306px;top:1360px;width:233px;height:29px;text-align:right;padding-right:38px">25.000000</div>
<div class="inp dd" style="left:2306px;top:1398px;width:233px;height:29px;"><span style="">Full Scale Bi.</span></div>
<div class="inp dd" style="left:2306px;top:1436px;width:233px;height:29px;"><span style=""></span></div>
<div class="a" style="left:2306px;top:1474px;width:200px;height:4px;background:#fff;border-radius:3px 3px 0 0"></div>
<svg class="a" style="left:486px;top:317px" width="24" height="24" viewBox="0 0 24 24"><g fill="none" stroke="#5a5a5a" stroke-width="2"><rect x="-6.5" y="-3.6" width="13" height="7.2" rx="3.6" transform="translate(16,6.5) rotate(-45)"/><rect x="-6.5" y="-3.6" width="13" height="7.2" rx="3.6" transform="translate(6.5,16) rotate(-45)"/></g></svg>
<svg class="a" style="left:486px;top:357px" width="24" height="24" viewBox="0 0 24 24"><g fill="none" stroke="#5a5a5a" stroke-width="2"><rect x="-6.5" y="-3.6" width="13" height="7.2" rx="3.6" transform="translate(16,6.5) rotate(-45)"/><rect x="-6.5" y="-3.6" width="13" height="7.2" rx="3.6" transform="translate(6.5,16) rotate(-45)"/></g></svg>
<div class="a" style="left:805px;top:434px;width:28px;height:29px;background:#dcdcdc;border-radius:3px"></div>
<div class="a" style="left:810px;top:439px;width:19.5px;height:20px;border:1.6px solid #4b4559;font-weight:bold;font-size:14px;line-height:17px;text-align:center;color:#4b4559">A</div>
<svg class="a" style="left:840px;top:436px" width="24" height="24" viewBox="0 0 24 24"><circle cx="14.5" cy="10" r="6.6" fill="none" stroke="#4b4559" stroke-width="2"/><path d="M9.8 14.8 L3 21.5" stroke="#4b4559" stroke-width="2.2" stroke-linecap="round"/></svg>
<svg class="a" style="left:841px;top:477px" width="22" height="26" viewBox="0 0 22 26"><path d="M11 22.5 L3.5 12.5 A8.6 8.6 0 1 1 18.5 12.5 Z" fill="none" stroke="#555" stroke-width="1.9" stroke-linejoin="round"/><circle cx="11" cy="10.4" r="3.6" fill="none" stroke="#555" stroke-width="1.9"/></svg>
<svg class="a" style="left:1686px;top:560px" width="18" height="8"><g fill="#333"><circle cx="3" cy="4" r="1.6"/><circle cx="8.5" cy="4" r="1.6"/><circle cx="14" cy="4" r="1.6"/></g></svg>
<div class="a" style="left:1685px;top:620px;width:23px;height:23px;background:#fafafa;border:1px solid #e6e6e6;border-radius:2px"></div>
<svg class="a" style="left:1685px;top:620px" width="24" height="24" viewBox="0 0 24 24"><path d="M5 18.5 L6 14 L15 5 L18 8 L9 17 Z" fill="#4b4559"/><path d="M16 4 L17.5 2.5 L20.5 5.5 L19 7 Z" fill="#4b4559"/></svg>
<div class="a" style="left:1709px;top:620px;width:22px;height:23px;background:#fafafa;border:1px solid #e6e6e6;border-radius:2px"></div>
<svg class="a" style="left:1708px;top:619px" width="24" height="24" viewBox="0 0 24 24"><g fill="none" stroke="#555" stroke-width="1.6"><rect x="-5.5" y="-3" width="11" height="6" rx="3" transform="translate(15,8) rotate(-50)"/><rect x="-5.5" y="-3" width="11" height="6" rx="3" transform="translate(8,15.5) rotate(-50)"/></g></svg>
<div class="a" style="left:1708px;top:786px;width:23px;height:23px;background:#fbfbfb;border:1px solid #e2e2e2;border-radius:2px"></div>
<svg class="a" style="left:1708px;top:786px" width="24" height="24" viewBox="0 0 24 24"><path d="M6 14 L11.5 8.5 L17 14" fill="none" stroke="#333" stroke-width="1.8"/></svg>
<div class="a" style="left:122px;top:1108px;width:2437px;height:411px;border:solid #36b8fb;border-width:4px 5px 4px 5px;border-radius:6px"></div>
<svg class="a" style="left:745px;top:1115px" width="150" height="67"><ellipse cx="75" cy="33.5" rx="67.8" ry="26.3" fill="none" stroke="#36b8fb" stroke-width="4.4"/></svg>
<svg class="a" style="left:1336px;top:1110px" width="18" height="10"><g fill="#9a9a9a"><circle cx="3" cy="5" r="1.3"/><circle cx="9" cy="5" r="1.3"/><circle cx="15" cy="5" r="1.3"/></g></svg>
</body></html>
